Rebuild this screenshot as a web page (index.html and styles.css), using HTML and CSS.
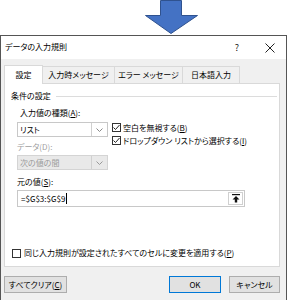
FILE: index.html
```html
<!DOCTYPE html>
<html lang="ja">
<head>
<meta charset="utf-8">
<link rel="stylesheet" href="styles.css">
</head>
<body>
<div class="arrow-area">
  <svg class="arrow" width="54" height="35" viewBox="0 0 54 35">
    <polygon points="15.5,0.5 36.5,0.5 36.5,15.5 52.5,15.5 26,33.5 0.5,15.5 15.5,15.5" fill="#4472c4" stroke="#2f528f" stroke-width="1"/>
  </svg>
</div>
<div class="dialog">
  <div class="titlebar">
    <span class="title">データの入力規則</span>
    <span class="help">?</span>
    <span class="close">
      <svg width="10" height="10" viewBox="0 0 10 10"><path d="M0.5 0.5 L9.5 9.5 M9.5 0.5 L0.5 9.5" stroke="#222" stroke-width="1" fill="none"/></svg>
    </span>
  </div>
  <div class="body">
    <div class="tabs">
      <div class="tab tab-active t1">設定</div>
      <div class="tab t2">入力時メッセージ</div>
      <div class="tab t3">エラー メッセージ</div>
      <div class="tab t4">日本語入力</div>
    </div>
    <div class="panel">
      <div class="group-head"><span>条件の設定</span><span class="group-line"></span></div>
      <div class="group">
        <div class="cols">
          <div class="left">
            <div class="label">入力値の種類(<u>A</u>):</div>
            <div class="combo">
              <span class="combo-text">リスト</span>
              <span class="combo-btn"><svg width="7" height="4" viewBox="0 0 7 4"><path d="M0.5 0.5 L3.5 3.5 L6.5 0.5" stroke="#888" fill="none"/></svg></span>
            </div>
            <div class="label label-dis">データ(D):</div>
            <div class="combo combo-dis">
              <span class="combo-text">次の値の間</span>
              <span class="combo-btn"><svg width="7" height="4" viewBox="0 0 7 4"><path d="M0.5 0.5 L3.5 3.5 L6.5 0.5" stroke="#999" fill="none"/></svg></span>
            </div>
          </div>
          <div class="right">
            <div class="check-row">
              <span class="cbox"><svg width="9" height="9" viewBox="0 0 9 9"><path d="M1.5 4.5 L3.5 6.5 L7.5 2" stroke="#222" fill="none"/></svg></span>
              <span>空白を無視する(<u>B</u>)</span>
            </div>
            <div class="check-row row2">
              <span class="cbox"><svg width="9" height="9" viewBox="0 0 9 9"><path d="M1.5 4.5 L3.5 6.5 L7.5 2" stroke="#222" fill="none"/></svg></span>
              <span>ドロップダウン リストから選択する(<u>I</u>)</span>
            </div>
          </div>
        </div>
        <div class="label label3">元の値(<u>S</u>):</div>
        <div class="source">
          <span class="source-text">=$G$3:$G$9<span class="caret"></span></span>
          <span class="source-btn"><svg width="8" height="9" viewBox="0 0 8 9"><rect x="0" y="0" width="8" height="1.2" fill="#111"/><path d="M4 2 L7.5 5.5 L5.2 5.5 L5.2 8.5 L2.8 8.5 L2.8 5.5 L0.5 5.5 Z" fill="#111"/></svg></span>
        </div>
      </div>
      <div class="apply-row">
        <span class="cbox"></span>
        <span>同じ入力規則が設定されたすべてのセルに変更を適用する(<u>P</u>)</span>
      </div>
    </div>
    <div class="buttons">
      <div class="btn btn-clear">すべてクリア(<u>C</u>)</div>
      <div class="spacer"></div>
      <div class="btn btn-ok">OK</div>
      <div class="btn btn-cancel">キャンセル</div>
    </div>
  </div>
</div>
</body>
</html>
```

FILE: styles.css
```css
html, body {
  margin: 0;
  padding: 0;
}
body {
  width: 288px;
  height: 300px;
  overflow: hidden;
  background: #ffffff;
  font-family: "Noto Sans CJK JP", "Noto Sans", sans-serif;
  font-size: 8px;
  line-height: 12px;
  color: #000;
  font-feature-settings: "palt";
}
u { text-decoration: underline; text-underline-offset: 1px; }

.arrow-area {
  height: 35px;
  padding-left: 145px;
}
.arrow { display: block; }

.dialog {
  width: 285px;
  height: 270px;
  border: 1px solid #555;
  background: #f0f0f0;
}
.titlebar {
  height: 23px;
  background: #fff;
  display: flex;
  align-items: center;
}
.title {
  flex: 1;
  padding-left: 4px;
  padding-bottom: 1px;
}
.help {
  width: 34px;
  text-align: center;
  font-size: 9px;
  color: #222;
}
.close {
  width: 32px;
  display: flex;
  justify-content: center;
  align-items: center;
}
.close svg { display: block; }

.body {
  padding: 6px 0 0 3px;
}
.tabs {
  display: flex;
  align-items: flex-end;
  height: 18px;
  position: relative;
  z-index: 1;
}
.tab {
  box-sizing: border-box;
  height: 17px;
  line-height: 15px;
  text-align: center;
  border: 1px solid #d9d9d9;
  border-bottom: none;
  border-left: none;
  background: #f0f0f0;
}
.tab-active {
  height: 19px;
  margin-bottom: -1px;
  background: #fff;
  border-left: 1px solid #d9d9d9;
  line-height: 17px;
}
.t1 { width: 39px; }
.t2 { width: 72px; }
.t3 { width: 68px; }
.t4 { width: 57px; }

.panel {
  box-sizing: border-box;
  width: 276px;
  height: 184px;
  background: #fff;
  border: 1px solid #d9d9d9;
  display: flex;
  flex-direction: column;
}
.group-head {
  display: flex;
  align-items: center;
  margin-top: 6px;
  padding-left: 6px;
  padding-right: 2px;
  height: 12px;
}
.group-line {
  flex: 1;
  height: 1px;
  background: #dcdcdc;
  margin-left: 5px;
}
.group {
  padding-left: 12px;
}
.cols {
  display: flex;
}
.left { width: 91px; }
.label {
  height: 12px;
  margin-top: 5px;
  padding-left: 3px;
}
.label-dis {
  color: #a0a0a0;
  margin-top: 4px;
  padding-left: 0;
}
.combo {
  box-sizing: border-box;
  height: 15px;
  margin-top: 3px;
  border: 1px solid #c8c8c8;
  display: flex;
  background: #fff;
}
.combo-dis {
  margin-top: 2px;
  background: #e9e9e9;
  border-color: #d4d4d4;
  color: #9a9a9a;
}
.combo-text {
  flex: 1;
  padding-left: 2px;
  line-height: 13px;
}
.combo-btn {
  width: 15px;
  border-left: 1px solid #d0d0d0;
  display: flex;
  align-items: center;
  justify-content: center;
}
.combo-btn svg { display: block; }

.right {
  padding-top: 20px;
  padding-left: 4px;
}
.check-row {
  display: flex;
  align-items: center;
  height: 11px;
  white-space: nowrap;
}
.row2 { margin-top: 2px; }
.cbox {
  box-sizing: border-box;
  width: 9px;
  height: 9px;
  border: 1px solid #333;
  background: #fff;
  margin-right: 2px;
  flex: none;
  display: flex;
  align-items: center;
  justify-content: center;
}
.cbox svg { display: block; margin: -1px; }

.label3 {
  margin-top: 6px;
  padding-left: 0;
}
.source {
  box-sizing: border-box;
  width: 228px;
  height: 17px;
  margin-top: 2px;
  border: 1px solid #c8c8c8;
  display: flex;
}
.source-text {
  flex: 1;
  padding-left: 3px;
  line-height: 15px;
  display: flex;
  align-items: center;
}
.caret {
  display: inline-block;
  width: 1px;
  height: 11px;
  background: #000;
  margin-left: 1px;
}
.source-btn {
  box-sizing: border-box;
  width: 15px;
  margin: 1px;
  border: 1px solid #d0d0d0;
  display: flex;
  align-items: center;
  justify-content: center;
}
.source-btn svg { display: block; }

.apply-row {
  margin-top: auto;
  margin-bottom: 7px;
  padding-left: 7px;
  display: flex;
  align-items: center;
  height: 12px;
  white-space: nowrap;
}
.apply-row .cbox { margin-right: 3px; }

.buttons {
  display: flex;
  margin-top: 9px;
  width: 276px;
}
.btn {
  box-sizing: border-box;
  height: 17px;
  line-height: 15px;
  text-align: center;
  background: #e1e1e1;
  border: 1px solid #adadad;
}
.btn-clear { width: 63px; }
.spacer { flex: 1; }
.btn-ok {
  width: 52px;
  border-color: #0078d7;
}
.btn-cancel {
  width: 51px;
  margin-left: 8px;
}
```
